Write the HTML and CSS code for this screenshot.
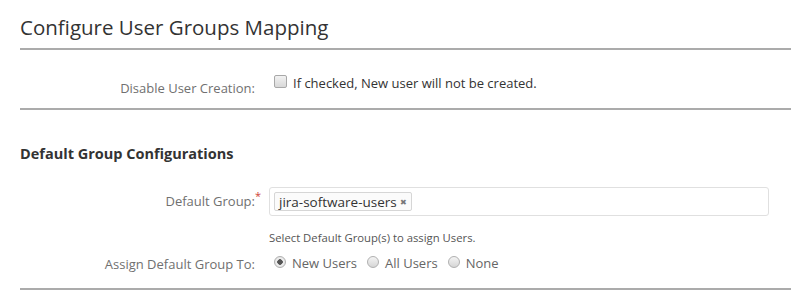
FILE: index.html
```html
<!DOCTYPE html>
<html lang="en">

<head>
	<meta charset="UTF-8">
	<title>Configure User Groups Mapping</title>
	<link rel="stylesheet" href="styles.css">
</head>

<body>
	<div class="page">
		<h2 class="title">Configure User Groups Mapping</h2>

		<div class="row row-top">
			<label class="lbl">Disable User Creation:</label>
			<div class="field">
				<label class="check"><input type="checkbox" class="box"> If checked, New user will not be created.</label>
			</div>
		</div>

		<h3 class="sub">Default Group Configurations</h3>

		<div class="row">
			<label class="lbl lbl-input">Default Group:<span class="req">*</span></label>
			<div class="field">
				<div class="select">
					<span class="tag">jira-software-users<span class="x">&#x2716;</span></span>
				</div>
				<div class="help">Select Default Group(s) to assign Users.</div>
			</div>
		</div>

		<div class="row row-radio">
			<label class="lbl">Assign Default Group To:</label>
			<div class="field radios">
				<label><input type="radio" name="assign" class="rad" checked> New Users</label>
				<label><input type="radio" name="assign" class="rad"> All Users</label>
				<label><input type="radio" name="assign" class="rad"> None</label>
			</div>
		</div>
	</div>
</body>

</html>
```

FILE: styles.css
```css
body {
	margin: 0;
	font-family: "Open Sans", "Noto Sans", sans-serif;
	color: #333;
	background: #fff;
}

.page {
	padding-left: 20px;
}

.title {
	margin: 0;
	padding-top: 13px;
	height: 35px;
	font-size: 20.5px;
	font-weight: normal;
	color: #333;
	border-bottom: 2px solid #ababab;
}

.row {
	display: grid;
	grid-template-columns: 235px 1fr;
	column-gap: 14px;
}

.row-top {
	padding: 24px 0 11px;
	border-bottom: 2px solid #ababab;
}

.lbl {
	text-align: right;
	font-size: 13px;
	color: #707070;
	padding-top: 5px;
}

.lbl-input {
	position: relative;
	padding-top: 5px;
}

/* asterisk hangs past the label column */
.req {
	position: absolute;
	right: -6px;
	top: 1px;
	color: #d04437;
	font-size: 11px;
}

.field {
	font-size: 13px;
}

.check {
	display: flex;
	align-items: center;
	gap: 6px;
	padding-left: 5px;
	color: #333;
}

.box {
	appearance: none;
	margin: 0;
	width: 13px;
	height: 13px;
	border: 1px solid #a8a8a8;
	border-radius: 2px;
	background: linear-gradient(#f2f2f2, #d8d8d8);
	position: relative;
	top: -2px;
}

.sub {
	margin: 0;
	padding: 34px 0 24px;
	font-size: 14.5px;
	font-weight: bold;
	color: #333;
}

.select {
	width: 494px;
	height: 27px;
	border: 1px solid #e0e0e0;
	border-radius: 3px;
	display: flex;
	align-items: center;
	padding-left: 4px;
	box-sizing: content-box;
}

.tag {
	display: inline-flex;
	align-items: center;
	height: 17px;
	padding: 0 4px;
	border: 1px solid #d6d6d6;
	border-radius: 2px;
	background: #fbfbfb;
	font-size: 13.5px;
	color: #333;
}

.x {
	font-size: 8px;
	color: #777;
	margin-left: 3px;
}

.help {
	font-size: 11.3px;
	color: #555;
	margin-top: 14px;
}

.row-radio {
	padding: 8px 0 15px;
	border-bottom: 2px solid #ababab;
}

.row-radio .lbl {
	padding-top: 2px;
}

.radios {
	display: flex;
	gap: 10px;
	padding-left: 5px;
	color: #666;
}

.radios label {
	display: flex;
	align-items: center;
	gap: 6px;
}

.rad {
	appearance: none;
	margin: 0;
	width: 12px;
	height: 12px;
	border: 1px solid #b0b0b0;
	border-radius: 50%;
	background: linear-gradient(#f4f4f4, #d6d6d6);
	position: relative;
	top: -1px;
}

.rad:checked {
	background: radial-gradient(circle, #555 0 2.5px, #f0f0f0 3px, #dadada);
}
```
